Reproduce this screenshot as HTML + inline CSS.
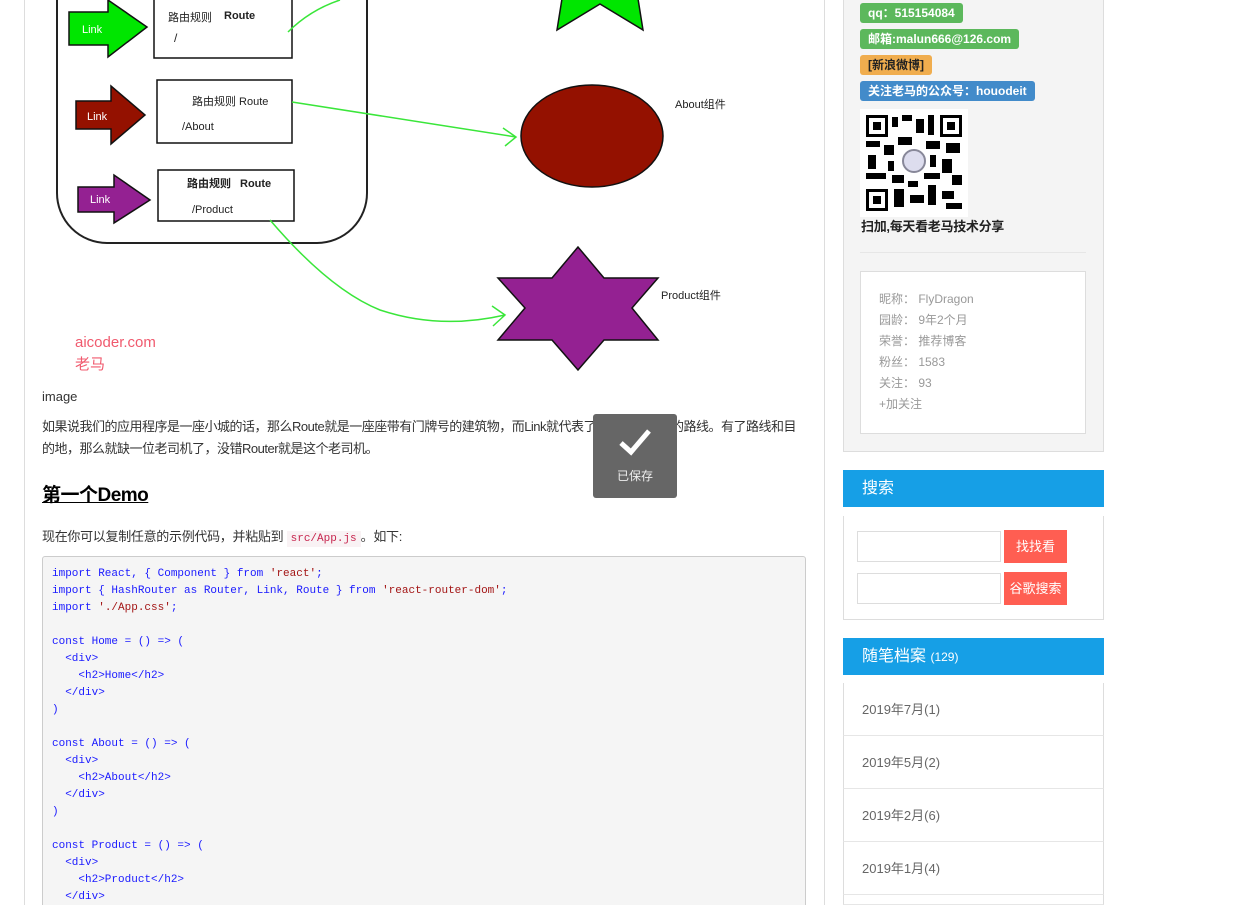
<!DOCTYPE html>
<html style="overflow:hidden;width:1235px;height:905px"><head><meta charset="utf-8">
<style>
*{margin:0;padding:0;box-sizing:border-box}
body{width:1235px;height:905px;overflow:hidden;background:#fff;position:relative;font-family:"Liberation Sans","Noto Sans CJK SC",sans-serif;color:#333}
.a{position:absolute}
.p{font-size:13px;color:#333}
.code{font-family:"Liberation Mono","DejaVu Sans Mono",monospace;font-size:11px;line-height:17px;color:#1a1aff;white-space:pre}
.s{color:#a31515}
.badge{position:absolute;left:860px;height:20px;border-radius:3px;color:#fff;font-weight:bold;font-size:12px;line-height:20px;padding:0 8px}
.box{font-size:12px;color:#999;line-height:21px}
.hd{position:absolute;left:843px;width:261px;height:37px;background:#169fe6;color:#fff;font-size:16px;line-height:37px;padding-left:19px}
.arch{position:absolute;left:843px;width:261px;height:53px;border-left:1px solid #ddd;border-right:1px solid #ddd;border-bottom:1px solid #e6e6e6;font-size:13px;color:#666;padding-left:18px;line-height:53px}
</style></head><body>
<div class="a" style="left:24px;top:0;width:1px;height:905px;background:#ddd"></div>
<div class="a" style="left:824px;top:0;width:1px;height:905px;background:#ddd"></div>

<svg class="a" style="left:0;top:0" width="780" height="380">
<rect x="57" y="-60" width="310" height="303" rx="50" fill="none" stroke="#222" stroke-width="2"/>
<polygon points="69,12 108,12 108,0 147,27 108,57 108,45 69,45" fill="#00e600" stroke="#111" stroke-width="1.5"/>
<text x="82" y="33" fill="#fff" font-size="11">Link</text>
<rect x="154" y="-5" width="138" height="63" fill="#fff" stroke="#111" stroke-width="1.5"/>
<text x="168" y="21" font-size="11" fill="#222">路由规则</text><text x="224" y="19" font-size="11" font-weight="bold" fill="#222">Route</text>
<text x="174" y="42" font-size="12" fill="#222">/</text>
<polygon points="76,101 111,101 111,86 145,115 111,144 111,129 76,129" fill="#941100" stroke="#111" stroke-width="1.5"/>
<text x="87" y="120" fill="#fff" font-size="11">Link</text>
<rect x="157" y="80" width="135" height="63" fill="#fff" stroke="#111" stroke-width="1.5"/>
<text x="192" y="105" font-size="11" fill="#222">路由规则 Route</text>
<text x="182" y="130" font-size="11" fill="#222">/About</text>
<polygon points="78,187 114,187 114,175 150,200 114,223 114,212 78,212" fill="#942192" stroke="#111" stroke-width="1.5"/>
<text x="90" y="203" fill="#fff" font-size="11">Link</text>
<rect x="158" y="170" width="136" height="51" fill="#fff" stroke="#111" stroke-width="1.5"/>
<text x="187" y="187" font-size="11" font-weight="bold" fill="#222">路由规则</text><text x="240" y="187" font-size="11" font-weight="bold" fill="#222">Route</text>
<text x="192" y="213" font-size="11" fill="#222">/Product</text>
<path d="M288 32 Q310 10 340 0" stroke="#3ae63a" stroke-width="1.5" fill="none"/>
<path d="M292 102 L516 137 M503 128 L516 137 L505 146" stroke="#3ae63a" stroke-width="1.5" fill="none"/>
<path d="M270 220 Q330 290 380 310 Q440 330 505 315 M492 306 L505 315 L493 326" stroke="#3ae63a" stroke-width="1.5" fill="none"/>
<polygon points="565,-20 557,30 600,4 643,30 635,-20" fill="#00e600" stroke="#111" stroke-width="1.5"/>
<ellipse cx="592" cy="136" rx="71" ry="51" fill="#941100" stroke="#111" stroke-width="1.5"/>
<text x="675" y="108" font-size="11" fill="#222">About组件</text>
<polygon points="578,247 552,278 498,278 525,308 498,340 552,340 578,370 604,340 658,340 632,308 658,278 604,278" fill="#942192" stroke="#111" stroke-width="1.5"/>
<text x="661" y="299" font-size="11" fill="#222">Product组件</text>
<text x="75" y="347" font-size="15" fill="#f05a6e">aicoder.com</text>
<text x="75" y="369" font-size="15" fill="#f05a6e">老马</text>
</svg>

<div class="a p" style="left:42px;top:389px">image</div>
<div class="a p" style="left:42px;top:416px;width:765px;line-height:22px;letter-spacing:-0.5px">如果说我们的应用程序是一座小城的话，那么Route就是一座座带有门牌号的建筑物，而Link就代表了到某个建筑物的路线。有了路线和目的地，那么就缺一位老司机了，没错Router就是这个老司机。</div>
<div class="a" style="left:42px;top:480px;font-size:19px;font-weight:bold;color:#000;text-decoration:underline;letter-spacing:-0.5px">第一个Demo</div>
<div class="a p" style="left:42px;top:526px;letter-spacing:-0.3px">现在你可以复制任意的示例代码，并粘贴到 <span style="font-family:'Liberation Mono',monospace;font-size:11px;color:#c7254e;background:#f9f2f4;padding:2px 4px;letter-spacing:0">src/App.js</span>。如下:</div>
<div class="a" style="left:42px;top:556px;width:764px;height:360px;background:#f5f5f5;border:1px solid #ccc;border-radius:3px"></div>
<div class="a code" style="left:52px;top:566px">import React, { Component } from <span class="s">'react'</span>;
import { HashRouter as Router, Link, Route } from <span class="s">'react-router-dom'</span>;
import <span class="s">'./App.css'</span>;

const Home = () => (
  &lt;div&gt;
    &lt;h2&gt;Home&lt;/h2&gt;
  &lt;/div&gt;
)

const About = () => (
  &lt;div&gt;
    &lt;h2&gt;About&lt;/h2&gt;
  &lt;/div&gt;
)

const Product = () => (
  &lt;div&gt;
    &lt;h2&gt;Product&lt;/h2&gt;
  &lt;/div&gt;</div>

<div class="a" style="left:593px;top:414px;width:84px;height:84px;background:#666;border-radius:3px;color:#eee;font-size:12px;text-align:center">
<svg width="40" height="40" style="margin-top:8px" viewBox="0 0 40 40"><path d="M6 21 L16 30 L34 9" stroke="#fff" stroke-width="5" fill="none"/></svg>
<div style="margin-top:2px">已保存</div></div>

<div class="a" style="left:843px;top:-2px;width:261px;height:454px;background:#f4f4f4;border:1px solid #ddd"></div>
<div class="badge" style="top:3px;background:#5cb85c">qq：515154084</div>
<div class="badge" style="top:29px;background:#5cb85c">邮箱:malun666@126.com</div>
<div class="badge" style="top:55px;background:#f0ad4e;color:#222">[新浪微博]</div>
<div class="badge" style="top:81px;background:#428bca">关注老马的公众号：houodeit</div>
<div class="a" style="left:860px;top:109px;width:108px;height:108px;background:#fff"></div>
<svg class="a" style="left:866px;top:115px" width="96" height="96">
<rect x="0" y="0" width="96" height="96" fill="#fff"/>
<g fill="#000">
<rect x="0" y="0" width="22" height="22"/><rect x="74" y="0" width="22" height="22"/><rect x="0" y="74" width="22" height="22"/>
</g><g fill="#fff"><rect x="3" y="3" width="16" height="16"/><rect x="77" y="3" width="16" height="16"/><rect x="3" y="77" width="16" height="16"/></g>
<g fill="#000"><rect x="7" y="7" width="8" height="8"/><rect x="81" y="7" width="8" height="8"/><rect x="7" y="81" width="8" height="8"/>
<rect x="26" y="2" width="6" height="10"/><rect x="36" y="0" width="10" height="6"/><rect x="50" y="4" width="8" height="14"/><rect x="62" y="0" width="6" height="20"/>
<rect x="0" y="26" width="14" height="6"/><rect x="18" y="30" width="10" height="10"/><rect x="2" y="40" width="8" height="14"/><rect x="0" y="58" width="20" height="6"/>
<rect x="32" y="22" width="14" height="8"/><rect x="60" y="26" width="14" height="8"/><rect x="80" y="28" width="14" height="10"/><rect x="76" y="44" width="10" height="14"/>
<rect x="86" y="60" width="10" height="10"/><rect x="26" y="60" width="12" height="8"/><rect x="28" y="74" width="10" height="18"/><rect x="44" y="80" width="14" height="8"/>
<rect x="62" y="70" width="8" height="20"/><rect x="76" y="76" width="12" height="8"/><rect x="80" y="88" width="16" height="6"/><rect x="58" y="58" width="16" height="6"/>
<rect x="22" y="46" width="6" height="10"/><rect x="64" y="40" width="6" height="12"/><rect x="42" y="66" width="10" height="6"/></g>
<circle cx="48" cy="46" r="11" fill="#dde" stroke="#889" stroke-width="2"/>
</svg>
<div class="a" style="left:861px;top:216px;font-size:13px;font-weight:bold;color:#222;letter-spacing:-0.3px">扫加,每天看老马技术分享</div>
<div class="a" style="left:860px;top:252px;width:226px;height:1px;background:#e6e6e6"></div>
<div class="a" style="left:860px;top:271px;width:226px;height:163px;background:#fff;border:1px solid #ddd"></div>
<div class="a box" style="left:879px;top:289px">昵称：&nbsp;FlyDragon<br>园龄：&nbsp;9年2个月<br>荣誉：&nbsp;推荐博客<br>粉丝：&nbsp;1583<br>关注：&nbsp;93<br>+加关注</div>

<div class="hd" style="top:470px">搜索</div>
<div class="a" style="left:843px;top:516px;width:261px;height:104px;border:1px solid #ddd;border-top:none"></div>
<div class="a" style="left:857px;top:531px;width:144px;height:31px;border:1px solid #ddd"></div>
<div class="a" style="left:857px;top:573px;width:144px;height:31px;border:1px solid #ddd"></div>
<div class="a" style="left:1004px;top:530px;width:63px;height:33px;background:#ff5e52;color:#fff;font-size:13px;line-height:33px;text-align:center">找找看</div>
<div class="a" style="left:1004px;top:572px;width:63px;height:33px;background:#ff5e52;color:#fff;font-size:13px;line-height:33px;text-align:center">谷歌搜索</div>

<div class="hd" style="top:638px">随笔档案 <span style="font-size:12px">(129)</span></div>
<div class="arch" style="top:683px">2019年7月(1)</div>
<div class="arch" style="top:736px">2019年5月(2)</div>
<div class="arch" style="top:789px">2019年2月(6)</div>
<div class="arch" style="top:842px">2019年1月(4)</div>
<div class="arch" style="top:895px;height:10px"></div>
</body></html>
